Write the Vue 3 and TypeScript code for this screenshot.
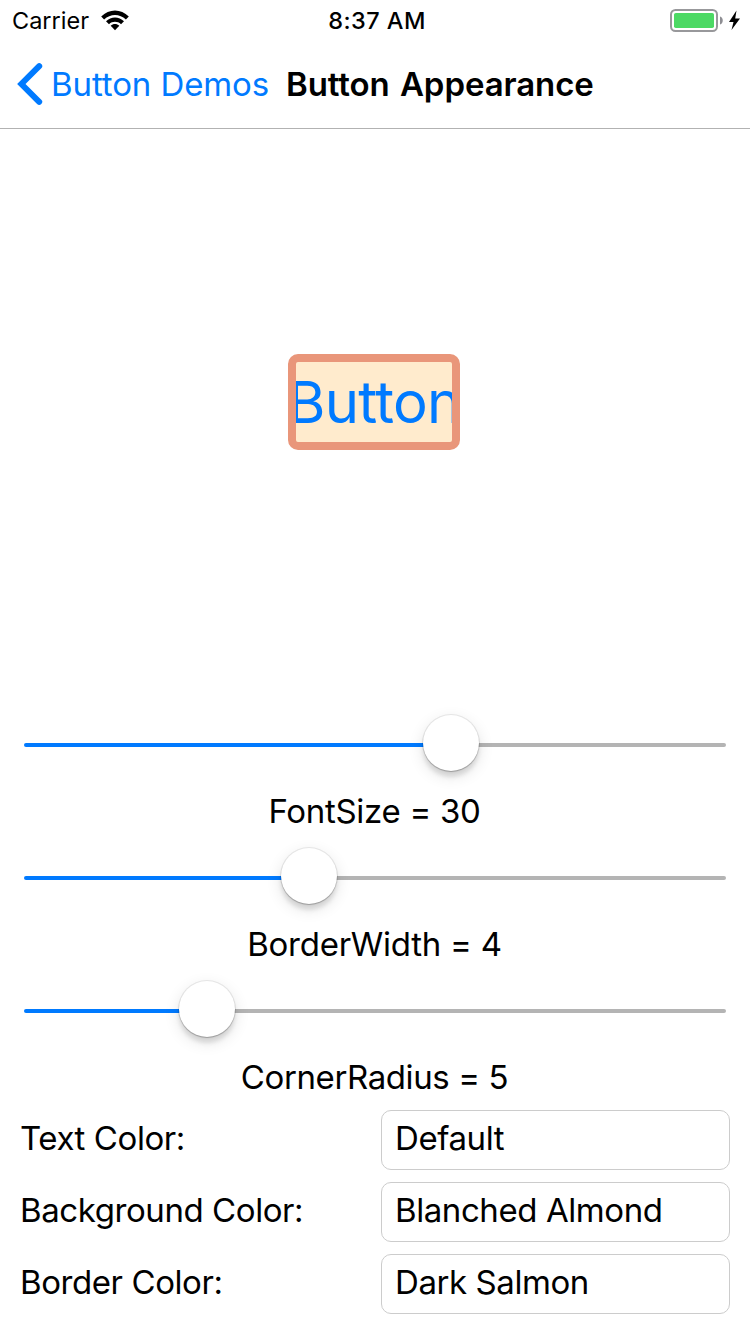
<script setup lang="ts">
import { ref } from 'vue'

interface SliderItem {
  name: string
  value: number
  position: number
  spacing: number
}

interface PickerItem {
  label: string
  value: string
}

const sliders = ref<SliderItem[]>([
  { name: 'FontSize', value: 30, position: 427, spacing: -0.3 },
  { name: 'BorderWidth', value: 4, position: 285, spacing: -0.25 },
  { name: 'CornerRadius', value: 5, position: 183, spacing: -0.4 },
])

const pickers = ref<PickerItem[]>([
  { label: 'Text Color:', value: 'Default' },
  { label: 'Background Color:', value: 'Blanched Almond' },
  { label: 'Border Color:', value: 'Dark Salmon' },
])
</script>

<template>
  <div class="screen">
    <header class="status">
      <div class="status-left">
        <span class="carrier">Carrier</span>
        <svg class="wifi" width="28" height="21" viewBox="0 0 28 21">
          <path d="M0.2 6.6C8-1.6 20-1.6 27.8 6.6L24.9 9.5C18.7 3.4 9.3 3.4 3.1 9.5Z" />
          <path d="M5 11.3C10.1 6.1 17.9 6.1 23 11.3L20 14.2C16.6 11 11.4 11 8 14.2Z" />
          <path d="M9.7 15.8C12.1 13.5 15.9 13.5 18.3 15.8L14 20.2Z" />
        </svg>
      </div>
      <span class="time">8:37 AM</span>
      <div class="status-right">
        <svg width="72" height="26" viewBox="0 0 72 26">
          <rect x="1" y="2" width="46" height="21" rx="4.5" fill="#fff" stroke="#98989b" stroke-width="2" />
          <rect x="4" y="5" width="40" height="15" rx="1.8" fill="#4cd964" />
          <path d="M50 8.5C53.7 9.3 53.7 15.7 50 16.5Z" fill="#8e8e93" />
          <path d="M66.5 2.5L59 14H63.5L61.5 22L70 10.6H65.2Z" fill="#000" />
        </svg>
      </div>
    </header>

    <nav class="nav">
      <button class="back">
        <svg width="26" height="42" viewBox="0 0 26 42">
          <path d="M22.2 3.2L4.4 21L22.2 38.8" fill="none" stroke="#007aff" stroke-width="6" stroke-linecap="round" stroke-linejoin="miter" />
        </svg>
        <span>Button Demos</span>
      </button>
      <h1>Button Appearance</h1>
    </nav>

    <main class="preview">
      <button class="demo"><span>Button</span></button>
    </main>

    <section class="sliders">
      <div v-for="s in sliders" :key="s.name" class="slider-item">
        <div class="slider">
          <div class="fill" :style="{ width: s.position + 'px' }"></div>
          <div class="thumb"></div>
          <div class="rest"></div>
        </div>
        <div class="caption" :style="{ letterSpacing: s.spacing + 'px' }">{{ s.name }} = {{ s.value }}</div>
      </div>
    </section>

    <section class="pickers">
      <div v-for="p in pickers" :key="p.label" class="picker-row">
        <span class="label">{{ p.label }}</span>
        <div class="field">{{ p.value }}</div>
      </div>
    </section>
  </div>
</template>

<style>
html,
body {
  background: #fff;
}
</style>

<style scoped>
.screen {
  width: 750px;
  height: 1334px;
  box-sizing: border-box;
  overflow: hidden;
  display: flex;
  flex-direction: column;
  background: #fff;
  color: #000;
  font-family: Inter, "Liberation Sans", sans-serif;
  font-size: 33px;
  white-space: nowrap;
}
button {
  font: inherit;
  border: 0;
  padding: 0;
  background: none;
}
.status {
  height: 40px;
  flex: none;
  display: grid;
  grid-template-columns: 1fr auto 1fr;
  align-items: center;
  font-size: 23.5px;
  line-height: 39px;
}
.status-left {
  display: flex;
  align-items: center;
  gap: 12px;
  padding-left: 12px;
}
.carrier {
  padding-top: 1px;
}
.wifi {
  fill: #000;
}
.time {
  font-weight: 500;
  letter-spacing: 0.45px;
  padding: 1px 0 0 4px;
}
.status-right {
  display: flex;
  justify-content: flex-end;
  padding: 1px 8px 0 0;
}
.nav {
  height: 88px;
  flex: none;
  border-bottom: 1px solid #b2b2b2;
  display: flex;
  align-items: center;
  padding-left: 17px;
}
.back {
  display: flex;
  align-items: center;
  gap: 8px;
  width: 269px;
  color: #007aff;
  letter-spacing: -0.1px;
}
h1 {
  margin: 0;
  font-size: 33px;
  font-weight: 600;
  letter-spacing: -0.08px;
  word-spacing: 2px;
}
.preview {
  flex: none;
  height: 586px;
  box-sizing: border-box;
  padding: 225px 0 0 288px;
}
.demo {
  display: flex;
  align-items: center;
  justify-content: center;
  box-sizing: border-box;
  width: 172px;
  height: 96px;
  border: 8px solid #e9967a;
  border-radius: 10px;
  background: #ffebcd;
  color: #007aff;
  font-size: 58px;
  letter-spacing: -0.7px;
  overflow: hidden;
}
.sliders {
  display: flex;
  flex-direction: column;
  gap: 17px;
}
.slider {
  height: 60px;
  margin: 0 24px;
  display: flex;
  align-items: center;
}
.fill,
.rest {
  height: 4px;
}
.fill {
  flex: none;
  background: #007aff;
  border-radius: 2px 0 0 2px;
}
.rest {
  flex: 1;
  background: #b4b4b4;
  border-radius: 0 2px 2px 0;
}
.thumb {
  flex: none;
  width: 56px;
  height: 56px;
  margin: -4px -28px 0;
  border-radius: 50%;
  background: #fff;
  z-index: 1;
  box-shadow: 0 0 0 1px rgba(0, 0, 0, 0.08), 0 1px 1px rgba(0, 0, 0, 0.2), 0 6px 4px rgba(0, 0, 0, 0.1), 0 5px 16px rgba(0, 0, 0, 0.12);
}
.caption {
  margin-top: 16px;
  padding-right: 1px;
  height: 40px;
  line-height: 40px;
  text-align: center;
}
.pickers {
  display: flex;
  flex-direction: column;
  gap: 12px;
  padding: 13px 20px 0 20px;
  letter-spacing: -0.42px;
}
.picker-row {
  display: flex;
  align-items: center;
  justify-content: space-between;
  height: 60px;
  line-height: 56px;
}
.label {
  height: 60px;
}
.field {
  width: 349px;
  height: 60px;
  box-sizing: border-box;
  border: 1px solid #ccc;
  border-radius: 10px;
  padding-left: 13px;
  line-height: 54px;
}
</style>
